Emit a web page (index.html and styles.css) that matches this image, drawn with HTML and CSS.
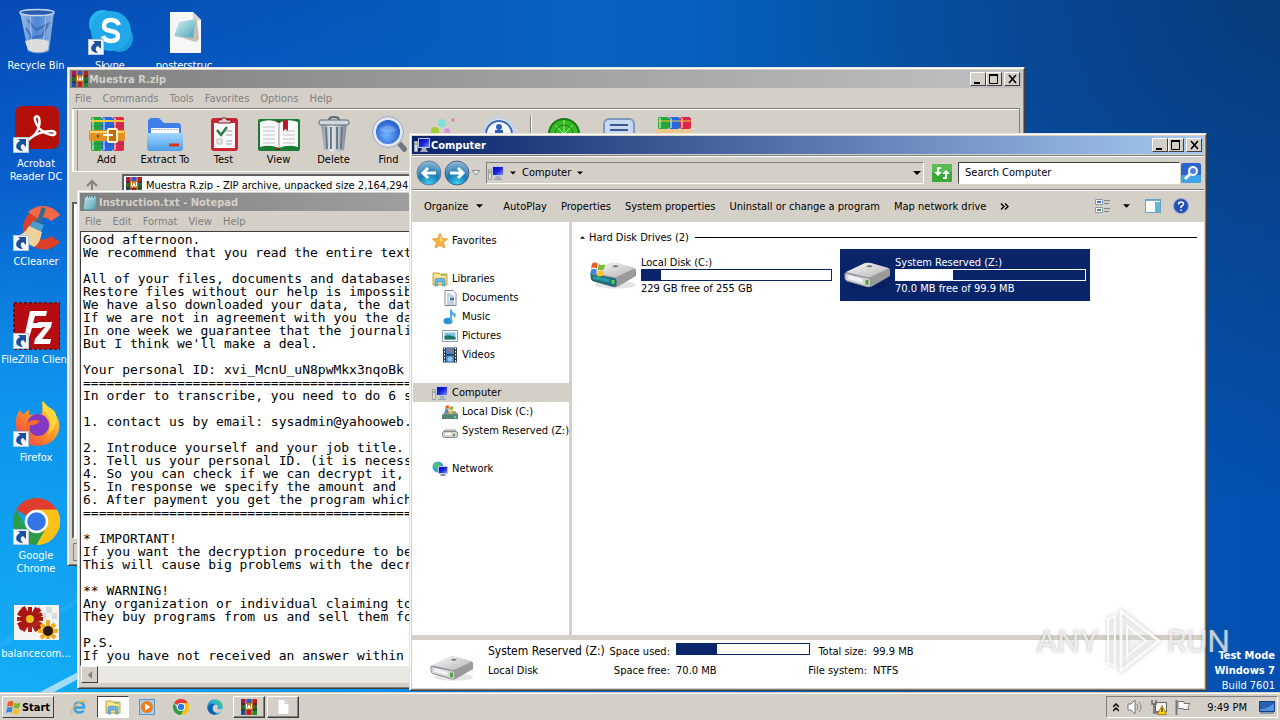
FILE: index.html
```
<!DOCTYPE html>
<html lang="en">
<head>
    <meta charset="UTF-8">
    <meta name="viewport" content="width=device-width, initial-scale=1.0">
    <title>Desktop</title>
    <link rel="stylesheet" href="styles.css">
</head>
<body>
    <!-- shared icons -->
    <svg class="defs" width="0" height="0" aria-hidden="true">
        <defs>
            <linearGradient id="gBin" x1="0" x2="1" y1="0" y2="0"><stop offset="0" stop-color="#c8dcf0" stop-opacity=".8"/><stop offset=".5" stop-color="#6c9cdc" stop-opacity=".7"/><stop offset="1" stop-color="#b4cce8" stop-opacity=".8"/></linearGradient>
            <linearGradient id="gNote" x1="0" x2="1" y1="0" y2="1"><stop offset="0" stop-color="#d9f3f5"/><stop offset="1" stop-color="#4aa3b4"/></linearGradient>
            <linearGradient id="gFolder" x1="0" x2="0" y1="0" y2="1"><stop offset="0" stop-color="#a5d6fb"/><stop offset="1" stop-color="#4a9fee"/></linearGradient>
            <linearGradient id="gMetal" x1="0" x2="1" y1="0" y2="0"><stop offset="0" stop-color="#8793a0"/><stop offset=".4" stop-color="#e6ebf0"/><stop offset="1" stop-color="#7c8894"/></linearGradient>
            <linearGradient id="gDrive" x1="0" x2="1" y1="0" y2="1"><stop offset="0" stop-color="#fafafa"/><stop offset="1" stop-color="#b4b4b4"/></linearGradient>
            <linearGradient id="gFox" x1="1" x2="0" y1="0" y2="1"><stop offset="0" stop-color="#fff04a"/><stop offset=".45" stop-color="#ff9a26"/><stop offset="1" stop-color="#f2304e"/></linearGradient>
            <radialGradient id="gLens" cx=".45" cy=".6" r=".6"><stop offset="0" stop-color="#6cb4ff"/><stop offset="1" stop-color="#1c4fc4"/></radialGradient>
            <radialGradient id="gNav" cx=".5" cy=".95" r=".9"><stop offset="0" stop-color="#40d0f4"/><stop offset=".5" stop-color="#1878b4"/><stop offset="1" stop-color="#8fb4d0"/></radialGradient>
            <linearGradient id="gEdge" x1="1" x2="0" y1="0" y2="1"><stop offset="0" stop-color="#4fd868"/><stop offset=".45" stop-color="#22a9e0"/><stop offset="1" stop-color="#0c59a4"/></linearGradient>
            <linearGradient id="gScreen" x1="0" x2="1" y1="0" y2="1"><stop offset="0" stop-color="#0508a8"/><stop offset=".5" stop-color="#1c22d8"/><stop offset="1" stop-color="#8aa0f4"/></linearGradient>
        </defs>
        <symbol id="shortcut" viewBox="0 0 16 16">
            <rect x=".5" y=".5" width="15" height="15" fill="#f4f7fb" stroke="#b6c6dc"/>
            <path d="M5 2h8v8l-3-3c-3 1-3 4 0 7-8 0-9-7-3-10z" fill="#1d4f9e"/>
        </symbol>
        <symbol id="rar" viewBox="0 0 16 16">
            <path d="M0 0h5v16H0z" fill="#a01c58"/><path d="M5 0h6v16H5z" fill="#2f55c0"/><path d="M11 0h5v16h-5z" fill="#b82424"/>
            <path d="M0 11h5v5H0z" fill="#1f50a0"/><path d="M11 10h5v6h-5z" fill="#1f8a34"/><path d="M5 11h6v5H5z" fill="#c01f28"/>
            <path d="M0 6h16v5H0z" fill="#2e6b2a"/><path d="M0 5h16M0 11h16" stroke="#20202c"/>
            <path d="M5 0v16M11 0v16" stroke="#e8a040"/><rect x="4" y="4" width="8" height="7" fill="#c87820"/>
            <path d="M5.500 5v4h2V6.500h1V9h2V5" fill="none" stroke="#fff"/>
        </symbol>
        <symbol id="books" viewBox="0 0 36 36">
            <rect x="2" y="1" width="11" height="34" rx="2" fill="#24a83c"/><rect x="13" y="1" width="11" height="34" rx="2" fill="#2768dc"/><rect x="24" y="1" width="11" height="34" rx="2" fill="#dc2846"/>
            <path d="M4 2v32M15 2v32M26 2v32" stroke="#fff" stroke-opacity=".5" stroke-width="2"/>
            <path d="M2 5h11M13 5h11M24 5h11" stroke="#f0c83c" stroke-width="2"/><path d="M2 10h33M2 28h33" stroke="#183c6c" stroke-opacity=".3"/>
            <rect x="0" y="14" width="36" height="11" rx="2" fill="#e09322"/><path d="M1 16h34" stroke="#ffd470" stroke-width="2"/>
            <rect x="19" y="13" width="9" height="13" rx="1" fill="#c46c10" stroke="#fff3d0" stroke-width="2"/><path d="M14 19h10" stroke="#fff" stroke-width="2"/>
            <circle cx="9" cy="20" r="1.500" fill="#8a4a08"/>
        </symbol>
        <symbol id="computer" viewBox="0 0 16 16">
            <path d="M.5 4.500h3v10h-3z" fill="#dcdcdc" stroke="#a0a0a0"/><path d="M1 7h2" stroke="#3ca03c"/>
            <path d="M4.500 1.500h11v9h-11z" fill="url(#gScreen)" stroke="#c2cbe4"/><path d="M8 11h4l1 3H7z" fill="#a8b0c0"/><path d="M6 14.500h8" stroke="#9ca4b8"/>
        </symbol>
        <symbol id="flag" viewBox="0 0 16 16">
            <path d="M2 3q3-2 5.500 0L6.500 8Q4 6 1 8z" fill="#ea5a24"/><path d="M8.500 3.500q3 2 6 0l-1 5q-3 2-6 0z" fill="#80b830"/>
            <path d="M1 9q3-2 5.500 0l-1 5Q3 12 0 14z" fill="#3e86d8"/><path d="M7.500 9.500q3 2 6 0l-1 5q-3 2-6 0z" fill="#f6c22c"/>
        </symbol>
        <symbol id="drive" viewBox="0 0 48 30">
            <ellipse cx="26" cy="25" rx="21" ry="4" fill="#000" opacity=".1"/>
            <path d="M1 13L21 3q3-1 7 0l18 5q1 1 1 3v5L28 27q-2 1-5 0L3 21q-2-1-2-3z" fill="#9a9a9a"/>
            <path d="M2 12L21 3q3-1 7 0l18 5L27 17q-2 1-4 0z" fill="url(#gDrive)"/>
            <path d="M1 13l23 5q3 0 3 3v5q0 1-3 1L3 21q-2-1-2-3z" fill="#d2d4d8" stroke="#8c8e92"/>
            <path d="M4 15l15 4v4L4 19z" fill="#f0f1f4"/><path d="M22 20h3v5h-3z" fill="#4c9c3c"/><ellipse cx="26" cy="6" rx="3" ry="1" fill="#777"/>
        </symbol>
        <symbol id="driveWin" viewBox="0 0 48 30">
            <use href="#drive"/><path d="M1 14l23 4q3 0 3 3v5q0 1-3 1L3 21q-2-1-2-3z" fill="#1d6c78"/><path d="M3 16l17 3v4L3 19z" fill="#2c9aa4"/>
            <path d="M22 20h3v4h-3z" fill="#58d050"/><use href="#flag" x="0" y="0" width="17" height="17"/>
        </symbol>
        <symbol id="folder" viewBox="0 0 16 16">
            <path d="M1 2h6l1 1h7v11H1z" fill="#f6dc7c" stroke="#c8a440"/><path d="M2.500 5h11" stroke="#fff6c8"/><path d="M9 4h5" stroke="#58b058"/>
            <path d="M3 15V9q0-1.500 1.500-1.500h7Q13 7.500 13 9v6h-2.500v-4h-5v4z" fill="#6cb8ec" stroke="#3a86c4" stroke-width=".6"/>
        </symbol>
        <symbol id="chrome" viewBox="0 0 48 48">
            <path d="M24 24L3.200 12A24 24 0 0 1 44.800 12z" fill="#e03c30"/><path d="M24 24V12h20.800A24 24 0 0 1 24 48z" fill="#fbc116"/><path d="M24 24l-10.400 6L3.200 12A24 24 0 0 0 24 48l10.400-18z" fill="#2c9c48"/>
            <path d="M24 12h20.800A24 24 0 0 1 24 48l10.400-18z" fill="#fbc116"/><circle cx="24" cy="24" r="12" fill="#fff"/><circle cx="24" cy="24" r="9.500" fill="#3276e8"/>
        </symbol>
        <symbol id="notepad" viewBox="0 0 16 16">
            <path d="M3 2h11v12L12 15.500H1.500z" fill="url(#gNote)" stroke="#5d98a4" stroke-width=".7"/><path d="M4 1v3M6.500 1v3M9 1v3M11.500 1v3" stroke="#6c7880"/><path d="M4 7h8M4 9h7M3.500 11h7" stroke="#88c0cc"/>
        </symbol>
        <symbol id="min" viewBox="0 0 12 10"><path d="M2 9h6" stroke="#000" stroke-width="2"/></symbol>
        <symbol id="max" viewBox="0 0 12 10"><path d="M1.500 1v8.500h8V1" fill="none" stroke="#000"/><path d="M1 1h9" stroke="#000" stroke-width="2"/></symbol>
        <symbol id="close" viewBox="0 0 12 10"><path d="M3 1l7 8M10 1L3 9" stroke="#000" stroke-width="1.600"/></symbol>
        <symbol id="caret" viewBox="0 0 8 4"><path d="M0 0h8L4 4z"/></symbol>
    </svg>

    <div class="desktop">
        <main class="workspace">
            <svg class="rays" viewBox="0 0 400 200" aria-hidden="true">
                <path d="M40 200L78 180v7L54 200z" fill="#fff" opacity=".6"/>
                <path d="M0 150l78-44v5L0 156z" fill="#fff" opacity=".06"/>
            </svg>

            <nav class="shortcuts" aria-label="Desktop icons">
                <ul>
                    <li><a href="#">
                        <svg viewBox="0 0 48 48"><path d="M8 4h34l-5 39q-10 5-21 0z" fill="url(#gBin)"/><ellipse cx="25" cy="4.500" rx="17" ry="3" fill="#2a5cae" stroke="#c6d6ea" stroke-width="1.500"/><path d="M13 33q12-4 24 0l-1 9q-10 5-20 0z" fill="#dcdcdc"/><path d="M16 12l8 10 12-6-6 12-12 2M14 20l6 10" fill="none" stroke="#205aa8" stroke-width="2" opacity=".6"/><path d="M18 8l2 30M34 9l-3 28" stroke="#fff" opacity=".4"/></svg>
                        <span>Recycle Bin</span></a></li>
                    <li><a href="#">
                        <svg viewBox="0 0 48 48"><rect x="3" y="0" width="44" height="43" rx="7" fill="#b40f08"/><path d="M15 34c10-4 14-14 12-22-1-3-5-2-4 2 2 8 9 14 17 15 5 0 4-4-1-4-9 0-18 4-23 9" fill="none" stroke="#fff" stroke-width="2.500"/><use href="#shortcut" x="1" y="31" width="16" height="16"/></svg>
                        <span>Acrobat Reader DC</span></a></li>
                    <li><a href="#">
                        <svg viewBox="0 0 48 48"><path d="M48 11A21 21 0 1 0 48 38L39 32A11 11 0 1 1 39 17z" fill="#dc4028"/><path d="M48 11A21 21 0 0 0 16 8l10 7q8-4 13 2z" fill="#f06848"/><path d="M30 3l4 2-6 16-4-2z" fill="#38688c"/><path d="M21 17l11 4-3 7-12-5z" fill="#4c9cd4"/><path d="M17 22l13 6q-2 12-8 15-10-5-18-11 8-1 13-10z" fill="#f2d29c"/><use href="#shortcut" x="1" y="31" width="16" height="16"/></svg>
                        <span>CCleaner</span></a></li>
                    <li><a href="#">
                        <svg viewBox="0 0 48 48"><rect x="2" y="1" width="46" height="46" fill="#b40c10"/><rect x="2" y="1" width="46" height="46" fill="none" stroke="#7c0408" stroke-width="2" stroke-dasharray="3 2"/><path d="M12 36L18 9h17l-1 5H23l-2 7h10l-1 5H20l-3 10z" fill="#fff"/><path d="M26 20h14l-1 5-9 12h9l-1 5H22l1-5 10-12h-8z" fill="#fff"/><use href="#shortcut" x="1" y="31" width="16" height="16"/></svg>
                        <span>FileZilla Client</span></a></li>
                    <li><a href="#">
                        <svg viewBox="0 0 48 48"><path d="M31 1q4 5 8 8 10 10 8 21-4 15-22 16Q6 44 4 26 3 16 8 10q1 3 4 4 2-3 5-4v5q8-1 13-1z" fill="url(#gFox)"/><circle cx="26" cy="25" r="11" fill="#8238c4"/><path d="M14 24q6-6 14-3-4 5-10 4-2 8 6 11-12 0-10-12z" fill="#f46a28"/><path d="M30 1q0 9 5 13 7 9 1 20 12-10 7-22-3-4-7-5-4-2-6-6z" fill="#ffd83c"/><use href="#shortcut" x="1" y="31" width="16" height="16"/></svg>
                        <span>Firefox</span></a></li>
                    <li><a href="#">
                        <svg viewBox="0 0 48 48"><use href="#chrome" x="1" y="0" width="47" height="47"/><use href="#shortcut" x="1" y="31" width="16" height="16"/></svg>
                        <span>Google Chrome</span></a></li>
                    <li><a href="#">
                        <svg viewBox="0 0 48 48"><rect x="2" y="9" width="45" height="35" fill="#f4f4f2"/><path d="M22 11h6v6h-6zM34 11h6v6h-6zM40 17h5v6h-5zM28 17h6v6h-6z" fill="#d4dcdc"/><g stroke="#a81810" stroke-width="4"><path d="M5 23h26M18 11v25M8 14l20 19M28 13L8 33M11 11l14 24M6 17l24 12M25 12L11 35M6 29l24-11"/></g><circle cx="18" cy="23" r="4" fill="#e8c020"/><g stroke="#f0ac1c" stroke-width="4"><path d="M26 35h20M36 24v19M29 28l14 14M43 28L29 42"/></g><circle cx="36" cy="35" r="5" fill="#2c1a0c"/></svg>
                        <span>balancecom...</span></a></li>
                </ul>
                <ul>
                    <li><a href="#">
                        <svg viewBox="0 0 48 48"><circle cx="17" cy="16" r="14" fill="#28b4ec"/><circle cx="33" cy="30" r="14" fill="#1a9ce0"/><circle cx="25" cy="23" r="20" fill="#20a8e8"/><path d="M33 17q-2-5-8-5-7 0-7 6 0 4 7 5t7 5q0 5-7 5-6 0-8-5" fill="none" stroke="#fff" stroke-width="4.500"/><use href="#shortcut" x="2" y="31" width="16" height="16"/></svg>
                        <span>Skype</span></a></li>
                </ul>
                <ul>
                    <li><a href="#">
                        <svg viewBox="0 0 48 48"><path d="M10 4h23l8 8v33H10z" fill="#f7f7f7"/><path d="M33 4v8h8" fill="#d4d4d4"/><path d="M20 14l17-2 2 19-3 3-20-6z" fill="#c8c0b4"/><path d="M19 14l17-3-3 19-19-2z" fill="url(#gNote)"/></svg>
                        <span>posterstruc</span></a></li>
                </ul>
            </nav>

            <aside class="build"><b>Test Mode</b><b>Windows 7</b><span>Build 7601</span></aside>

            <!-- archive window -->
            <section class="window archive" aria-label="Muestra R.zip">
                <header class="title inactive">
                    <svg><use href="#rar"/></svg><h2>Muestra R.zip</h2>
                    <button aria-label="Minimize"><svg><use href="#min"/></svg></button><button aria-label="Maximize"><svg><use href="#max"/></svg></button><button class="shut" aria-label="Close"><svg><use href="#close"/></svg></button>
                </header>
                <nav class="menu"><button>File</button><button>Commands</button><button>Tools</button><button>Favorites</button><button>Options</button><button>Help</button></nav>
                <div class="tools">
                    <button><svg><use href="#books"/></svg>Add</button>
                    <button class="wide"><svg viewBox="0 0 36 36"><path d="M1 6q0-4 4-4h7l5 5h14q3 0 3 4v18H1z" fill="#3f7fe8"/><path d="M4 12h28v12H4z" fill="#fff"/><path d="M5 13.500h26" stroke="#9cb8d8" stroke-dasharray="2 1"/><path d="M0 19q0-2 2-2h32q2 0 2 2v13q0 3-3 3H3q-3 0-3-3z" fill="url(#gFolder)"/><path d="M22 29h10" stroke="#d8321c" stroke-width="3"/></svg>Extract To</button>
                    <button><svg viewBox="0 0 36 36"><rect x="5" y="2" width="27" height="33" rx="3" fill="#cc2432"/><path d="M8 7h21v25H8z" fill="#fafafa"/><path d="M12 7V4h3q3-5 6 0h4v3z" fill="#e8c4c8" stroke="#7c1820"/><path d="M11 14l4 5 6-8" fill="none" stroke="#2c7c48" stroke-width="2.500"/><path d="M11 23h5v5h-5z" fill="#e8e8e8" stroke="#bbb"/><path d="M20 15h6M20 19h6M20 25h6M20 28h6" stroke="#a0a0a0"/></svg>Test</button>
                    <button><svg class="broad" viewBox="0 0 42 36"><rect x="0" y="3" width="42" height="32" rx="2" fill="#187c34"/><path d="M20 5h-2V34H22V5z" fill="#702c18"/><path d="M2 6q11-4 19 1v25q-9-4-19-1zM40 6q-11-4-19 1v25q9-4 19-1z" fill="#fafafa"/><path d="M21 7v25" stroke="#999"/><path d="M5 11h12M5 15h12M5 19h12M5 23h12M25 15h12M25 19h12M25 23h12M25 27h12M5 27h12" stroke="#c4c4c4"/><path d="M25 4h5v11l-2.500-2-2.500 2z" fill="#b81c2c"/></svg>View</button>
                    <button><svg viewBox="0 0 36 36"><path d="M5 7h26l-3 27q-10 3-20 0z" fill="url(#gMetal)"/><path d="M10 11l1 22M15 11v22M21 11v22M26 11l-1 22" stroke="#6c7884" stroke-width="2"/><rect x="3" y="4" width="30" height="5" rx="2" fill="#d0d8e0" stroke="#5c6874"/><path d="M13 4q0-3 5-3t5 3" fill="none" stroke="#5c6874" stroke-width="2"/></svg>Delete</button>
                    <button><svg viewBox="0 0 36 36"><path d="M27 26l8 9" stroke="#6c7684" stroke-width="5"/><circle cx="17" cy="16" r="14" fill="url(#gLens)" stroke="#e0e6ee" stroke-width="4"/><circle cx="17" cy="16" r="15.500" fill="none" stroke="#98a4b8"/><path d="M8 14q9-9 18 0-9 5-18 0z" fill="#fff" opacity=".2"/></svg>Find</button>
                    <button><svg viewBox="0 0 36 36"><circle cx="16" cy="7" r="4" fill="#80e0dc"/><circle cx="27" cy="4" r="2" fill="#e48c9c"/><circle cx="9" cy="15" r="4" fill="#a4cc30"/><circle cx="21" cy="15" r="3" fill="#d894dc"/></svg>Wizard</button>
                    <button><svg viewBox="0 0 36 36"><circle cx="18" cy="18" r="16" fill="#f4f8fc" stroke="#c8d4e4" stroke-width="3"/><circle cx="18" cy="18" r="13" fill="none" stroke="#3c6cb8" stroke-width="2"/><circle cx="18" cy="11" r="3" fill="#2c60b4"/><path d="M14 16h6v12" stroke="#2c60b4" stroke-width="4" fill="none"/></svg>Info</button>
                    <i class="rule"></i>
                    <button><svg viewBox="0 0 36 36"><circle cx="18" cy="18" r="15" fill="#34b824" stroke="#187814" stroke-width="2"/><path d="M18 4v28M4 18h28M9 9l18 18M27 9L9 27" stroke="#a0f080"/><circle cx="18" cy="18" r="9" fill="none" stroke="#168010"/></svg>VirusScan</button>
                    <button><svg viewBox="0 0 36 36"><rect x="3" y="3" width="30" height="24" rx="5" fill="#c8d8f0" stroke="#8098c0" stroke-width="2"/><path d="M9 9h18M9 14h18M9 19h18" stroke="#3c5890" stroke-width="2"/></svg>Comment</button>
                    <button><svg viewBox="0 0 36 36"><rect x="2" y="1" width="11" height="12" rx="2" fill="#24a83c"/><rect x="13" y="1" width="11" height="12" rx="2" fill="#2768dc"/><rect x="24" y="1" width="11" height="12" rx="2" fill="#dc2846"/><path d="M4 2v10M15 2v10M26 2v10" stroke="#fff" stroke-opacity=".5" stroke-width="2"/><path d="M2 5h33" stroke="#f0c83c"/><path d="M0 13h36v20H0z" fill="#ecc88c"/></svg>SFX</button>
                </div>
                <div class="location">
                    <button class="up" aria-label="Up"><svg viewBox="0 0 12 12"><path d="M6 12V2M1 7l5-5 5 5" fill="none" stroke="#848484" stroke-width="2"/></svg></button>
                    <div class="path"><svg><use href="#rar"/></svg>Muestra R.zip - ZIP archive, unpacked size 2,164,294 bytes</div>
                </div>
                <div class="filelist"></div>
                <footer class="state"><span></span></footer>
            </section>

            <!-- notepad window -->
            <section class="window notepad" aria-label="Instruction.txt - Notepad">
                <header class="title inactive">
                    <svg><use href="#notepad"/></svg><h2>Instruction.txt - Notepad</h2>
                </header>
                <nav class="menu"><button>File</button><button>Edit</button><button>Format</button><button>View</button><button>Help</button></nav>
                <textarea aria-label="Text" wrap="off" readonly>Good afternoon.
We recommend that you read the entire text

All of your files, documents and databases
Restore files without our help is impossib
We have also downloaded your data, the dat
If we are not in agreement with you the da
In one week we guarantee that the journali
But I think we'll make a deal.

Your personal ID: xvi_McnU_uN8pwMkx3nqoBk
==========================================
In order to transcribe, you need to do 6 s

1. contact us by email: sysadmin@yahooweb.

2. Introduce yourself and your job title.
3. Tell us your personal ID. (it is necess
4. So you can check if we can decrypt it,
5. In response we specify the amount and
6. After payment you get the program which
==========================================

* IMPORTANT!
If you want the decryption procedure to be
This will cause big problems with the decr

** WARNING!
Any organization or individual claiming to
They buy programs from us and sell them fo

P.S.
If you have not received an answer within</textarea>
                <div class="scroll"><button aria-label="Scroll left"><svg viewBox="0 0 8 8"><path d="M6 0v8L2 4z" fill="#808080"/></svg></button></div>
            </section>

            <!-- explorer window -->
            <section class="window explorer" aria-label="Computer">
                <header class="title">
                    <svg><use href="#computer"/></svg><h2>Computer</h2>
                    <button aria-label="Minimize"><svg><use href="#min"/></svg></button><button aria-label="Maximize"><svg><use href="#max"/></svg></button><button class="shut" aria-label="Close"><svg><use href="#close"/></svg></button>
                </header>
                <div class="navigate">
                    <button class="round" aria-label="Back"><svg viewBox="0 0 26 26"><circle cx="13" cy="13" r="12" fill="url(#gNav)" stroke="#5c80a0"/><path d="M20 13H8M12 8l-5 5 5 5" fill="none" stroke="#fff" stroke-width="3"/></svg></button>
                    <button class="round" aria-label="Forward"><svg viewBox="0 0 26 26"><circle cx="13" cy="13" r="12" fill="url(#gNav)" stroke="#44688c"/><path d="M6 13h12M14 8l5 5-5 5" fill="none" stroke="#fff" stroke-width="3"/></svg></button>
                    <button class="recent" aria-label="Recent pages"><svg viewBox="0 0 8 6"><path d="M.5.500h7L4 5z" fill="#f4f4f4" stroke="#888"/></svg></button>
                    <div class="address">
                        <svg><use href="#computer"/></svg>
                        <svg class="caret"><use href="#caret"/></svg>
                        <button>Computer</button>
                        <svg class="caret"><use href="#caret"/></svg>
                        <button class="drop" aria-label="Previous locations"><svg class="caret"><use href="#caret"/></svg></button>
                    </div>
                    <button class="refresh" aria-label="Refresh"><svg viewBox="0 0 20 18"><rect width="20" height="18" rx="1" fill="#38a838"/><path d="M0 0h20v8H0z" fill="#78d068" opacity=".5"/><path d="M9 4H6v4M11 14h3v-4" fill="none" stroke="#fff" stroke-width="2"/><path d="M2 8h8l-4 4zM10 10h8l-4-4z" fill="#fff"/></svg></button>
                    <input class="search" type="text" aria-label="Search" value="Search Computer">
                    <button class="go" aria-label="Go"><svg viewBox="0 0 20 20"><rect width="20" height="20" rx="2" fill="#2c64d0"/><path d="M0 12h20v8H0z" fill="#44b4ec" opacity=".8"/><path d="M4 16l5-5" stroke="#fff" stroke-width="3"/><circle cx="12" cy="8" r="4" fill="#4c80e0" stroke="#fff" stroke-width="2"/></svg></button>
                </div>
                <div class="commands">
                    <button class="organize">Organize<svg class="caret"><use href="#caret"/></svg></button>
                    <button>AutoPlay</button><button>Properties</button><button>System properties</button><button>Uninstall or change a program</button><button>Map network drive</button>
                    <button aria-label="More"><svg class="more" viewBox="0 0 9 7"><path d="M1 .500l3 3-3 3M5 .500l3 3-3 3" fill="none" stroke="#000" stroke-width="1.400"/></svg></button>
                    <div class="views">
                        <button aria-label="View"><svg viewBox="0 0 16 16"><path d="M.5 1.500h7v5h-7zM.5 9.500h7v5h-7z" fill="#fff" stroke="#8899a8"/><path d="M2 4h4" stroke="#2870c0" stroke-width="2"/><path d="M2 12h4" stroke="#4c8c60" stroke-width="2"/><path d="M9 2.500h6M9 5.500h5M9 10.500h6M9 13.500h5" stroke="#7c8490"/></svg></button>
                        <button aria-label="Change view"><svg class="caret"><use href="#caret"/></svg></button>
                        <button class="preview" aria-label="Preview pane"><svg viewBox="0 0 16 14"><rect x=".5" y=".5" width="15" height="13" fill="#fff" stroke="#6ca0c0"/><path d="M1 1.500h14" stroke="#70b0d8"/><path d="M10 3h5v10h-5z" fill="#60b8d8"/></svg></button>
                        <button aria-label="Help"><svg viewBox="0 0 16 16"><circle cx="8" cy="8" r="7.500" fill="#2450b4" stroke="#90a4d0"/><path d="M5.500 6.500q0-2.500 2.500-2.500t2.500 2Q10.500 7.500 8 8.500V10M8 11.500v1.500" fill="none" stroke="#fff" stroke-width="1.500"/></svg></button>
                    </div>
                </div>
                <div class="panes">
                    <nav class="tree" aria-label="Folders">
                        <ul>
                            <li><a href="#"><svg viewBox="0 0 16 16"><path d="M8 .5l2.200 5 5.300.5-4 3.500 1.200 5.500L8 12.200 3.300 15l1.200-5.500-4-3.500 5.300-.5z" fill="#fbb43c" stroke="#e8983c"/><path d="M8 3l1.500 3.500L12 7 8 8z" fill="#ffe8a0"/></svg>Favorites</a></li>
                        </ul>
                        <ul>
                            <li><a href="#"><svg><use href="#folder"/></svg>Libraries</a></li>
                            <li class="sub"><a href="#"><svg viewBox="0 0 16 16"><path d="M3 .5h8l3 3v12H3z" fill="#fff" stroke="#7c8898"/><path d="M5 4h4M5 6h7M5 12h7M5 14h7" stroke="#88a0c0"/><path d="M8 7.500h4v3H8z" fill="#3c74b8"/><path d="M5 8h2M5 10h2" stroke="#88a0c0"/></svg>Documents</a></li>
                            <li class="sub"><a href="#"><svg viewBox="0 0 16 16"><ellipse cx="6" cy="12" rx="4.500" ry="3.300" fill="#2c90d8"/><path d="M8 12V.5h2q0 3 3.500 4 1 3-1 5 0-3-2.500-3.500V12z" fill="#50acec"/></svg>Music</a></li>
                            <li class="sub"><a href="#"><svg viewBox="0 0 16 16"><path d="M.5 2.500h15v11H.5z" fill="#fff" stroke="#8898a4"/><path d="M2.500 4.500h11v7h-11z" fill="#78c4e0"/><path d="M2.500 8q4-2 11 1v2.500h-11z" fill="#1c7468"/></svg>Pictures</a></li>
                            <li class="sub"><a href="#"><svg viewBox="0 0 16 16"><path d="M1 .5h14v15H1z" fill="#303840"/><path d="M4 1h8v6H4zM4 8.500h8V15H4z" fill="#3c88cc"/><path d="M2.500 1v14M13.500 1v14" stroke="#fff" stroke-dasharray="1.500 1.500"/><circle cx="8" cy="12" r="2.500" fill="#90c8f0"/><path d="M5 3l4 3 2-4z" fill="#b4705c"/></svg>Videos</a></li>
                        </ul>
                        <ul>
                            <li class="current"><a href="#"><svg><use href="#computer"/></svg>Computer</a></li>
                            <li class="sub"><a href="#"><svg viewBox="0 0 16 16"><path d="M1 10l3-3h9l3 3v5H0z" fill="#909894"/><path d="M0 10.500h16V15H0z" fill="#50847c"/><path d="M12 12h2v2h-2z" fill="#60e060"/><use href="#flag" x="2" y="0" width="11" height="10"/></svg>Local Disk (C:)</a></li>
                            <li class="sub"><a href="#"><svg viewBox="0 0 16 16"><path d="M1 9l2-2h10l2 2z" fill="#e8e8e8" stroke="#999"/><rect x=".5" y="8.500" width="15" height="6" rx="2" fill="#d4d4d4" stroke="#868686"/><path d="M3 11h6" stroke="#fff" stroke-width="2"/><path d="M11 11h2v2h-2z" fill="#4c9450"/></svg>System Reserved (Z:)</a></li>
                        </ul>
                        <ul>
                            <li><a href="#"><svg viewBox="0 0 16 16"><circle cx="6" cy="6" r="5.500" fill="#38a4d0"/><path d="M2 3q4-3 6 0L5 7 3 8z" fill="#58c068"/><path d="M6.500 5.500h9v7h-9z" fill="url(#gScreen)" stroke="#c0c8dc"/><path d="M9 13h4l1 2H8z" fill="#8890a8"/></svg>Network</a></li>
                        </ul>
                    </nav>
                    <div class="content">
                        <h3><svg viewBox="0 0 6 3"><path d="M0 3h6L3 0z"/></svg>Hard Disk Drives (2)</h3>
                        <div class="drives">
                            <article class="drive">
                                <svg><use href="#driveWin"/></svg>
                                <div><h4>Local Disk (C:)</h4><div class="bar"><i style="width:10%"></i></div><p>229 GB free of 255 GB</p></div>
                            </article>
                            <article class="drive selected">
                                <svg><use href="#drive"/></svg>
                                <div><h4>System Reserved (Z:)</h4><div class="bar"><i style="width:30%"></i></div><p>70.0 MB free of 99.9 MB</p></div>
                            </article>
                        </div>
                    </div>
                </div>
                <footer class="details">
                    <svg><use href="#drive"/></svg>
                    <div class="facts">
                        <strong>System Reserved (Z:)</strong><span>Space used:</span><div class="bar"><i style="width:30%"></i></div><span>Total size:</span><em>99.9 MB</em>
                        <em>Local Disk</em><span>Space free:</span><em>70.0 MB</em><span>File system:</span><em>NTFS</em>
                    </div>
                </footer>
            </section>

            <div class="watermark">
                <span>ANY</span>
                <svg viewBox="0 0 58 66"><path d="M17 3v60L55 33z" fill="#fff" fill-opacity=".25" stroke="#fff" stroke-opacity=".85" stroke-width="3"/><path d="M23 18v30l19-15z" fill="none" stroke="#fff" stroke-opacity=".8" stroke-width="2"/><path d="M11 8L4 11v44l7 3z" fill="#fff" fill-opacity=".2" stroke="#fff" stroke-opacity=".8" stroke-width="2"/></svg>
                <span>RUN</span>
            </div>
        </main>

        <footer class="taskbar">
            <button class="start"><svg><use href="#flag"/></svg>Start</button>
            <button class="task" aria-label="Internet Explorer"><svg viewBox="0 0 16 16"><path d="M3.500 8.500h9.500Q13 3.500 8.300 3.500T3.500 8.500q0 5 5 5 3 0 4-2" fill="none" stroke="#38a0e4" stroke-width="2.600"/><path d="M1 15Q-2 10 9 3q6-3 6 1" fill="none" stroke="#e4c048" stroke-width="1.400"/></svg></button>
            <button class="task open" aria-label="Explorer"><svg><use href="#folder"/></svg></button>
            <button class="task" aria-label="Media Player"><svg viewBox="0 0 16 16"><rect x=".5" y=".5" width="15" height="15" fill="#a8cdec" stroke="#5c94c8"/><circle cx="8" cy="8" r="6" fill="#f07c18"/><path d="M6 4.500v7L11.500 8z" fill="#fff"/></svg></button>
            <button class="task" aria-label="Chrome"><svg><use href="#chrome"/></svg></button>
            <button class="task" aria-label="Edge"><svg viewBox="0 0 16 16"><circle cx="8" cy="8" r="7.800" fill="url(#gEdge)"/><path d="M6 7q3-3 5 0 0 2-1 2.500 2 1.500 5.500 0Q14 14 10 14 5 13 6 7z" fill="#d4d0c8"/><path d="M6 7q-3 5 4 8-8 2-9.500-6Q3 4 8 5z" fill="#1060b0"/></svg></button>
            <button class="task raised" aria-label="WinRAR"><svg><use href="#rar"/></svg></button>
            <button class="task raised" aria-label="Notepad"><svg viewBox="0 0 16 16"><path d="M3 .5h7l4 4v11H3z" fill="#fdfdfd" stroke="#ccc"/><path d="M10 .5v4h4" fill="#e4e4e4" stroke="#ccc"/></svg></button>
            <div class="tray">
                <button aria-label="Show hidden icons"><svg class="up2" viewBox="0 0 6 9"><path d="M0 4l3-3 3 3M0 8l3-3 3 3" fill="none" stroke="#000" stroke-width="1.500"/></svg></button>
                <button aria-label="Volume"><svg viewBox="0 0 16 16"><path d="M1 5h3l4-4v14l-4-4H1z" fill="#fff" stroke="#777"/><path d="M10 5q2 3 0 6M12 3q4 5 0 10" fill="none" stroke="#888"/></svg></button>
                <button aria-label="Network"><svg viewBox="0 0 16 16"><path d="M4.500 3.500h11v9h-11z" fill="#f4f4f4" stroke="#666"/><path d="M1 1v4h4V1M3 5v9h5" fill="none" stroke="#666" stroke-width="1.500"/><path d="M11 6.500l4.500 9h-9z" fill="#ffd428" stroke="#b08810"/><path d="M11 9v4" stroke="#000"/></svg></button>
                <button aria-label="Action Center"><svg viewBox="0 0 16 16"><path d="M1.500 1v15" stroke="#777" stroke-width="2"/><path d="M3 2.500h6v2h6l-2 3 1 3H8v-1H3z" fill="#fff" stroke="#777"/></svg></button>
                <time>9:49 PM</time>
                <button aria-label="Show desktop"><svg viewBox="0 0 16 14"><path d="M.5 1.500h15v10H.5z" fill="#2860b4" stroke="#173c80"/><path d="M1 9q8 0 14-6v8H1z" fill="#4c94dc"/><path d="M1 13h14" stroke="#8898ac" stroke-width="2"/></svg></button>
            </div>
        </footer>
    </div>
</body>
</html>
```

FILE: styles.css
```
*{
    margin: 0;
    padding: 0;
    box-sizing: border-box;
}
body{
    font: 11px/13px "DejaVu Sans Condensed", "Noto Sans", sans-serif;
    color: #000;
}
button{
    font: inherit;
    color: inherit;
    background: none;
    border: 0;
    white-space: nowrap;
}
ul{
    list-style: none;
}
a{
    color: inherit;
    text-decoration: none;
}
h2, h3, h4{
    font-size: 11px;
    font-weight: normal;
}
em{
    font-style: normal;
}
svg{
    display: block;
    width: 16px;
    height: 16px;
    flex: none;
}
.defs{
    position: absolute;
    width: 0;
    height: 0;
}
.caret{
    width: 7px;
    height: 4px;
}

/* desktop */
.desktop{
    display: flex;
    flex-direction: column;
    height: 100vh;
    overflow: hidden;
    background: radial-gradient(ellipse 70% 110% at 0% 100%, #14b0f6 0%, #0e93ec 42%, rgba(8,106,218,.7) 68%, rgba(6,78,176,0) 100%), radial-gradient(ellipse 45% 70% at 100% 0%, #083c7a, rgba(6,72,156,0)), linear-gradient(to right, #0743ac, #0664be 45%, #0450b0);
}
.workspace{
    position: relative;
    flex: 1;
    overflow: hidden;
}
.rays{
    position: absolute;
    left: 0;
    bottom: 0;
    width: 400px;
    height: 200px;
}
.shortcuts{
    display: flex;
    gap: 2px;
    padding-top: 8px;
}
.shortcuts ul{
    width: 72px;
}
.shortcuts li{
    height: 98px;
}
.shortcuts a{
    display: flex;
    flex-direction: column;
    align-items: center;
    gap: 3px;
    color: #fff;
    text-align: center;
}
.shortcuts svg{
    width: 48px;
    height: 48px;
}
.shortcuts span{
    max-width: 72px;
}
.build{
    position: absolute;
    right: 5px;
    bottom: 0;
    display: flex;
    flex-direction: column;
    gap: 2px;
    color: #fff;
    text-align: right;
}

/* windows */
.window{
    position: absolute;
    display: flex;
    flex-direction: column;
    padding: 2px;
    background: #d4d0c8;
    border: 1px solid;
    border-color: #e8e4dc #404040 #404040 #e8e4dc;
    box-shadow: inset 1px 1px #fff, inset -1px -1px #808080;
}
.title{
    display: flex;
    align-items: center;
    flex: none;
    height: 18px;
    padding: 0 2px;
    background: linear-gradient(to right, #0a246a, #a6caf0);
    color: #fff;
}
.title.inactive{
    background: linear-gradient(to right, #808080, #c0c0c0);
    color: #d4d0c8;
}
.title h2{
    flex: 1;
    padding-left: 1px;
    font-weight: bold;
}
.title button, .scroll button{
    display: flex;
    align-items: center;
    justify-content: center;
    width: 16px;
    height: 14px;
    background: #d4d0c8;
    border: 1px solid;
    border-color: #fff #404040 #404040 #fff;
}
.title button svg{
    width: 12px;
    height: 10px;
}
.title .shut{
    margin-left: 2px;
}
.menu{
    display: flex;
    flex: none;
    gap: 11px;
    height: 20px;
    padding: 0 5px;
    color: #808080;
}

/* archive */
.archive{
    left: 67px;
    top: 67px;
    right: 255px;
    bottom: 126px;
}
.tools{
    display: flex;
    flex: none;
    height: 64px;
    padding: 7px 0 0 6px;
    margin: 0 2px;
    border: 1px solid #fff;
    border-top-color: #808080;
    border-right-color: #808080;
    box-shadow: inset 1px 1px #fff, inset 4px 0 #d4d0c8, inset 5px 0 #909090;
}
.tools button{
    display: flex;
    flex-direction: column;
    align-items: center;
    gap: 1px;
    width: 55px;
}
.tools .wide{
    width: 62px;
}
.tools svg{
    width: 36px;
    height: 36px;
}
.tools .broad{
    width: 42px;
}
.rule{
    width: 2px;
    margin: 0 4px 6px;
    border-left: 1px solid #808080;
    border-right: 1px solid #fff;
}
.location{
    display: flex;
    align-items: center;
    flex: none;
    gap: 24px;
    height: 26px;
    padding: 2px 4px 2px 16px;
}
.location .up svg{
    width: 12px;
    height: 12px;
}
.path{
    display: flex;
    align-items: center;
    flex: 1;
    gap: 4px;
    height: 22px;
    padding: 0 2px;
    background: #fff;
    border: 2px solid;
    border-color: #606060 #fff #fff #606060;
    white-space: nowrap;
}
.filelist{
    flex: 1;
    margin: 4px 2px 0;
    background: #fff;
    border: 2px solid #606060;
    border-bottom-color: #fff;
}
.state{
    flex: none;
    height: 24px;
    padding: 4px 3px 2px;
}
.state span{
    display: block;
    height: 18px;
    border: 1px solid #808080;
}

/* notepad */
.notepad{
    left: 77px;
    top: 190px;
    right: 500px;
    bottom: 3px;
}
.notepad textarea{
    flex: 1;
    min-height: 0;
    padding: 1px 2px;
    overflow: hidden;
    resize: none;
    border: 1px solid;
    border-color: #404040 #fff #fff #404040;
    outline: 0;
    background: #fff;
    color: #000;
    font: 13px/13px "DejaVu Sans Mono", monospace;
    white-space: pre;
}
.scroll{
    display: flex;
    flex: none;
    height: 17px;
    margin: 0 0 3px 1px;
    background: #eae8e3;
}
.scroll button{
    width: 17px;
    height: 17px;
}
.scroll svg{
    width: 8px;
    height: 8px;
}

/* explorer */
.explorer{
    left: 409px;
    top: 133px;
    right: 73px;
    bottom: 1px;
}
.navigate{
    display: flex;
    align-items: center;
    flex: none;
    height: 35px;
    padding: 0 3px 0 4px;
    margin-top: 1px;
    border-top: 1px solid #808080;
    border-bottom: 1px solid #808080;
    box-shadow: inset 0 1px #fff, 0 1px #fff;
}
.round svg{
    width: 26px;
    height: 26px;
}
.round{
    margin-right: 2px;
}
.recent svg{
    width: 8px;
    height: 6px;
}
.address{
    display: flex;
    align-items: center;
    flex: 1;
    gap: 6px;
    height: 22px;
    padding: 0 2px 0 1px;
    margin: 0 0 0 6px;
    border: 1px solid;
    border-color: #808080 #fff #fff #808080;
}
.address .drop{
    margin-left: auto;
}
.address .caret{
    width: 6px;
}
.address .drop .caret{
    width: 8px;
}
.refresh{
    margin-left: 8px;
}
.refresh svg{
    width: 20px;
    height: 18px;
}
.search{
    width: 222px;
    height: 22px;
    margin: 0 1px 0 6px;
    padding: 0 6px;
    border: 1px solid;
    border-color: #404040 #fff #fff #404040;
    outline: 0;
    background: #fff;
    font: inherit;
}
.go svg{
    width: 20px;
    height: 20px;
}
.commands{
    display: flex;
    align-items: center;
    flex: none;
    gap: 14px;
    height: 32px;
    padding: 0 15px 0 12px;
}
.commands button{
    display: flex;
    align-items: center;
    gap: 8px;
}
.commands .organize{
    padding-right: 6px;
}
.commands .more{
    width: 9px;
    height: 7px;
}
.views{
    display: flex;
    align-items: center;
    gap: 12px;
    margin-left: auto;
}
.preview{
    margin-left: 3px;
}
.panes{
    display: flex;
    flex: 1;
    min-height: 0;
    background: #fff;
}
.tree{
    flex: none;
    width: 160px;
    padding: 9px 0 9px 1px;
    border-right: 3px solid #d4d0c8;
}
.tree ul{
    margin-bottom: 19px;
}
.tree a{
    display: flex;
    align-items: center;
    gap: 4px;
    height: 19px;
    padding-left: 19px;
    white-space: nowrap;
}
.tree .sub a{
    padding-left: 29px;
}
.tree .current{
    background: #d4d0c8;
}
.content{
    flex: 1;
    padding: 9px 7px 9px 8px;
}
.content h3{
    display: flex;
    align-items: center;
    gap: 4px;
}
.content h3 svg{
    width: 5px;
    height: 3px;
}
.content h3::after{
    content: "";
    flex: 1;
    height: 1px;
    margin-left: 2px;
    background: #000;
}
.drives{
    display: flex;
    gap: 4px;
    padding: 5px 6px;
}
.drive{
    display: flex;
    align-items: center;
    gap: 4px;
    width: 250px;
    height: 52px;
    padding: 0 4px;
}
.drive svg{
    width: 47px;
    height: 30px;
}
.drive > div{
    flex: 1;
}
.drive.selected{
    background: #0a246a;
    color: #fff;
}
.bar{
    height: 12px;
    border: 1px solid #0a246a;
    background: #fff;
}
.bar i{
    display: block;
    height: 100%;
    background: #0a246a;
}
.drive .bar{
    margin-bottom: 1px;
}
.selected .bar{
    border-color: #fff;
    background: #0a246a;
}
.selected .bar i{
    background: #fff;
}
.details{
    display: flex;
    flex: none;
    gap: 14px;
    height: 53px;
    padding: 2px 0 0 18px;
    border-top: 5px solid #d4d0c8;
    background: #fff;
}
.details > svg{
    width: 44px;
    height: 28px;
    margin-top: 12px;
}
.facts{
    display: grid;
    grid-template-columns: 118px 58px 134px 51px auto;
    grid-template-rows: 19px 19px;
    column-gap: 6px;
    align-items: center;
}
.facts strong{
    font-size: 12px;
    font-weight: normal;
    white-space: nowrap;
}
.facts span{
    display: flex;
    justify-content: flex-end;
    white-space: nowrap;
}
.facts .bar{
    align-self: start;
    margin-top: 1px;
}

.watermark{
    position: absolute;
    right: 50px;
    bottom: 18px;
    display: flex;
    align-items: center;
    gap: 5px;
    color: rgba(255,255,255,.7);
    font: 32px/32px "Liberation Sans Narrow", "Roboto", sans-serif;
    text-shadow: 0 0 3px rgba(120,120,120,.6);
    pointer-events: none;
}
.watermark svg{
    width: 58px;
    height: 66px;
    filter: drop-shadow(0 0 2px rgba(120,120,120,.5));
}

/* taskbar */
.taskbar{
    display: flex;
    align-items: center;
    flex: none;
    height: 28px;
    padding: 2px 2px 0;
    background: #d4d0c8;
    box-shadow: inset 0 1px #d4d0c8, inset 0 2px #fff;
}
.start, .task{
    display: flex;
    align-items: center;
    justify-content: center;
    height: 22px;
}
.start{
    width: 52px;
    margin-right: 9px;
    border: 1px solid;
    border-color: #fff #404040 #404040 #fff;
    font-weight: bold;
}
.task{
    width: 32px;
    margin-right: 2px;
}
.open{
    background: #fff;
    border: 1px solid;
    border-color: #404040 #fff #fff #404040;
}
.raised{
    border: 1px solid;
    border-color: #fff #404040 #404040 #fff;
    box-shadow: inset -1px -1px #808080;
}
.tray{
    display: flex;
    align-items: center;
    gap: 8px;
    height: 22px;
    margin-left: auto;
    padding: 0 2px 0 6px;
    border: 1px solid;
    border-color: #808080 #fff #fff #808080;
}
.tray .up2{
    width: 6px;
    height: 9px;
}
.tray time{
    margin: 0 4px 0 8px;
}
```
